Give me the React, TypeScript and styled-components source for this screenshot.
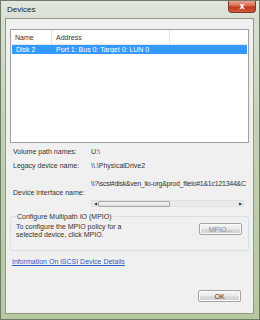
import React from "react";
import styled, { createGlobalStyle } from "styled-components";

const Global = createGlobalStyle`
  html, body { margin: 0; padding: 0; background: #ffffff; }
  * { box-sizing: border-box; }
`;

const Window = styled.div`
  width: 260px;
  height: 320px;
  display: flex;
  flex-direction: column;
  background: linear-gradient(180deg, #e2e6df 0px, #d8dfd2 20px, #c3d2b4 120px, #b4c9a0 320px);
  border: 1px solid #6f7a68;
  font-family: "Liberation Sans", Arial, sans-serif;
  font-size: 7px;
  color: #1e1e1e;
  overflow: hidden;
`;

const TitleBar = styled.div`
  height: 17px;
  display: flex;
  align-items: flex-start;
  justify-content: space-between;
  padding: 0 3px 0 6px;
`;

const Title = styled.div`
  font-size: 8px;
  color: #222;
  padding-top: 4px;
`;

const CloseButton = styled.div`
  width: 28px;
  height: 12px;
  border: 1px solid #7d3a2e;
  border-top: none;
  border-radius: 0 0 4px 4px;
  background: linear-gradient(180deg, #e9a792 0%, #d7654c 45%, #c0391e 55%, #d4593c 100%);
  display: flex;
  align-items: center;
  justify-content: center;
  color: #fff;
  font-size: 8px;
  font-weight: bold;
  font-family: "DejaVu Sans", sans-serif;
  line-height: 1;
`;

const Client = styled.div`
  flex: 1;
  margin: 0 5px 5px 4px;
  background: #f0f0f0;
  border: 1px solid #8e9a86;
  display: flex;
  flex-direction: column;
  padding: 10px 4px 0 4px;
`;

const ListBox = styled.div`
  height: 114px;
  background: #fff;
  border: 1px solid #a0a0a0;
  display: flex;
  flex-direction: column;
`;

const HeaderRow = styled.div`
  height: 15px;
  display: flex;
  align-items: center;
  border-bottom: 1px solid #e6e6e6;
  color: #333;
`;

const Cell = styled.div<{ $w?: number }>`
  ${(p) => (p.$w ? `width: ${p.$w}px;` : "flex: 1;")}
  padding-left: 4px;
  white-space: nowrap;
  overflow: hidden;
`;

const HeaderCell = styled(Cell)`
  height: 100%;
  display: flex;
  align-items: center;
  border-right: 1px solid #e4e4e4;
`;

const SelectedRow = styled.div`
  height: 9px;
  margin: 0 1px;
  display: flex;
  align-items: center;
  background: #3399ff;
  color: #fff;
`;

const InfoGrid = styled.div`
  display: grid;
  grid-template-columns: 78px 1fr;
  padding: 0 3px;
  margin-top: 1px;
`;

const Label = styled.div<{ $h: number; $top?: number }>`
  height: ${(p) => p.$h}px;
  display: flex;
  align-items: ${(p) => (p.$top !== undefined ? "flex-start" : "center")};
  padding-top: ${(p) => p.$top || 0}px;
  color: #333;
  white-space: nowrap;
`;

const Value = styled.div<{ $h: number }>`
  height: ${(p) => p.$h}px;
  display: flex;
  align-items: center;
  color: #333;
  white-space: nowrap;
  overflow: hidden;
`;

const IfaceValue = styled.div`
  height: 37px;
  min-width: 0;
  display: flex;
  flex-direction: column;
  padding-top: 8px;
  gap: 12px;
  color: #333;
  white-space: nowrap;
  line-height: 8px;
`;

const IfaceText = styled.div`
  letter-spacing: -0.25px;
`;

const ScrollBar = styled.div`
  height: 7px;
  width: 153px;
  background: #e9e9e9;
  border: 1px solid #e0e0e0;
  display: flex;
  align-items: center;
`;

const Arrow = styled.div`
  width: 6px;
  font-size: 4px;
  color: #333;
  text-align: center;
  line-height: 1;
`;

const Thumb = styled.div`
  width: 72px;
  height: 6px;
  background: linear-gradient(180deg, #f6f6f6, #dcdcdc);
  border: 1px solid #a8a8a8;
  border-radius: 1px;
`;

const Spacer = styled.div`
  flex: 1;
`;

const GroupBox = styled.fieldset`
  margin: 4px 0 0 0;
  padding: 3px 6px 6px 5px;
  border: 1px solid #d5dfe5;
  border-radius: 3px;
  display: flex;
  align-items: flex-start;
  justify-content: space-between;
  height: 38px;
`;

const Legend = styled.legend`
  padding: 0 1px;
  color: #333;
`;

const GroupText = styled.div`
  color: #333;
  line-height: 8px;
`;

const Button = styled.div`
  width: 43px;
  height: 12px;
  border: 1px solid #a3a3a3;
  border-radius: 2px;
  background: linear-gradient(180deg, #f4f4f4 0%, #ebebeb 50%, #dddddd 51%, #cfcfcf 100%);
  display: flex;
  align-items: center;
  justify-content: center;
  color: #333;
  box-shadow: inset 0 0 0 1px #fbfbfb;
`;

const DisabledLabel = styled.span`
  color: #8a8a8a;
`;

const Link = styled.a`
  margin-top: 7px;
  padding-left: 2px;
  color: #2661c9;
  text-decoration: underline;
  align-self: flex-start;
`;

const Footer = styled.div`
  flex: 1;
  display: flex;
  align-items: flex-end;
  justify-content: flex-end;
  padding: 0 8px 11px 0;
`;

export default function App() {
  return (
    <>
      <Global />
      <Window>
        <TitleBar>
          <Title>Devices</Title>
          <CloseButton>x</CloseButton>
        </TitleBar>
        <Client>
          <ListBox>
            <HeaderRow>
              <HeaderCell $w={41}>Name</HeaderCell>
              <HeaderCell $w={118}>Address</HeaderCell>
            </HeaderRow>
            <SelectedRow>
              <Cell $w={40}>Disk 2</Cell>
              <Cell>Port 1: Bus 0: Target 0: LUN 0</Cell>
            </SelectedRow>
          </ListBox>
          <InfoGrid>
            <Label $h={14}>Volume path names:</Label>
            <Value $h={14}>U:\</Value>
            <Label $h={14}>Legacy device name:</Label>
            <Value $h={14}>\\.\PhysicalDrive2</Value>
            <Label $h={37} $top={17}>Device interface name:</Label>
            <IfaceValue>
              <IfaceText>\\?\scsi#disk&amp;ven_lio-org&amp;prod_fileio#1&amp;1c121344&amp;C</IfaceText>
              <ScrollBar>
                <Arrow>◀</Arrow>
                <Thumb />
                <Spacer />
                <Arrow>▶</Arrow>
              </ScrollBar>
            </IfaceValue>
          </InfoGrid>
          <GroupBox>
            <Legend>Configure Multipath IO (MPIO)</Legend>
            <GroupText>
              To configure the MPIO policy for a
              <br />
              selected device, click MPIO.
            </GroupText>
            <Button>
              <DisabledLabel>MPIO...</DisabledLabel>
            </Button>
          </GroupBox>
          <Link href="#">Information On iSCSI Device Details</Link>
          <Footer>
            <Button>OK</Button>
          </Footer>
        </Client>
      </Window>
    </>
  );
}
